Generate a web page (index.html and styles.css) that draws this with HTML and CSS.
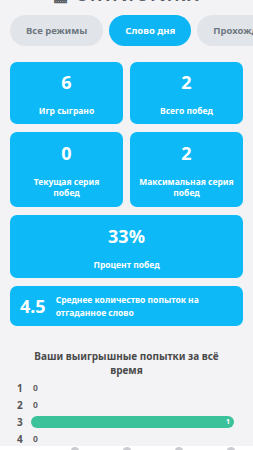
FILE: index.html
```html
<!DOCTYPE html>
<html lang="ru">
<head>
    <meta charset="UTF-8">
    <meta name="viewport" content="width=device-width, initial-scale=1.0">
    <title>Статистика</title>
    <link rel="stylesheet" href="styles.css">
</head>
<body>

    <h2 class="title">&#9638; СТАТИСТИКА</h2>

    <div class="tabs">
        <button class="tab">Все режимы</button>
        <button class="tab active">Слово дня</button>
        <button class="tab">Прохождение</button>
    </div>

    <div class="stats-grid">
        <div class="stat-card">
            <div class="stat-value">6</div>
            <div class="stat-label">Игр сыграно</div>
        </div>
        <div class="stat-card">
            <div class="stat-value">2</div>
            <div class="stat-label">Всего побед</div>
        </div>
        <div class="stat-card tall">
            <div class="stat-value">0</div>
            <div class="stat-label">Текущая серия<br>побед</div>
        </div>
        <div class="stat-card tall">
            <div class="stat-value">2</div>
            <div class="stat-label">Максимальная серия<br>побед</div>
        </div>
        <div class="stat-card wide">
            <div class="stat-value">33%</div>
            <div class="stat-label">Процент побед</div>
        </div>
        <div class="stat-card row-card">
            <div class="stat-value">4.5</div>
            <div class="stat-label">Среднее количество попыток на<br>отгаданное слово</div>
        </div>
    </div>

    <h3 class="dist-title">Ваши выигрышные попытки за всё время</h3>

    <div class="distribution">
        <div class="dist-row"><span class="dist-num">1</span><span class="dist-count">0</span></div>
        <div class="dist-row"><span class="dist-num">2</span><span class="dist-count">0</span></div>
        <div class="dist-row">
            <span class="dist-num">3</span>
            <div class="dist-bar" style="width: 100%;">1</div>
        </div>
        <div class="dist-row"><span class="dist-num">4</span><span class="dist-count">0</span></div>
        <div class="dist-row"><span class="dist-num">5</span><span class="dist-count">0</span></div>
    </div>

    <nav class="bottom-nav">
        <span class="nav-icon"></span>
        <span class="nav-icon"></span>
        <span class="nav-icon"></span>
        <span class="nav-icon"></span>
    </nav>

</body>
</html>
```

FILE: styles.css
```css
/* Reset styles */
* {
    margin: 0;
    padding: 0;
    box-sizing: border-box;
}

body {
    font-family: 'Noto Sans', 'Lato', sans-serif;
    background-color: #f3f3f6;
    color: #444;
    padding: 0 10px;
    overflow: hidden;
    height: 450px;
}

/* Title (scrolled mostly out of view) */
.title {
    font-size: 16px;
    font-weight: 700;
    letter-spacing: 2px;
    color: #5a5f66;
    text-align: center;
    line-height: 16px;
    margin-top: -13px;
}

/* Mode tabs */
.tabs {
    display: flex;
    gap: 6px;
    margin-top: 12px;
    margin-right: -10px;
    overflow: hidden;
}

.tab {
    flex-shrink: 0;
    height: 31px;
    padding: 0 16px;
    border: none;
    border-radius: 16px;
    background-color: #e1e5ea;
    color: #6e7780;
    font-family: inherit;
    font-size: 9.5px;
    font-weight: 700;
}

.tab.active {
    background-color: #0db5f5;
    color: #ffffff;
}

/* Stat cards */
.stats-grid {
    display: grid;
    grid-template-columns: 1fr 1fr;
    gap: 8px 7px;
    margin-top: 16px;
}

.stat-card {
    background-color: #0db9f7;
    border-radius: 7px;
    color: #ffffff;
    text-align: center;
    height: 62px;
    padding-top: 9px;
}

.stat-card.tall {
    height: 75px;
    padding-top: 10px;
}

.stat-card.wide {
    grid-column: span 2;
    height: 63px;
    padding-top: 10px;
}

.stat-value {
    font-size: 18px;
    font-weight: 700;
    line-height: 22px;
}

.stat-label {
    font-size: 8.5px;
    font-weight: 700;
    line-height: 11px;
    margin-top: 12px;
}

.stat-card.row-card {
    grid-column: span 2;
    height: 40px;
    padding: 0 0 0 10px;
    display: flex;
    align-items: center;
    gap: 10px;
    text-align: left;
}

.row-card .stat-label {
    margin-top: 0;
    line-height: 13px;
}

/* Guess distribution */
.dist-title {
    font-size: 10px;
    font-weight: 700;
    color: #4a4a4a;
    text-align: center;
    line-height: 14px;
    margin: 23px auto 0;
    width: 190px;
}

.distribution {
    margin-top: 2px;
    padding-left: 7px;
}

.dist-row {
    display: flex;
    align-items: center;
    height: 17px;
    font-weight: 700;
    color: #555;
}

.dist-num {
    font-size: 10px;
    width: 16px;
}

.dist-count {
    font-size: 8.5px;
    color: #666;
}

.dist-bar {
    height: 12px;
    border-radius: 6px;
    background-color: #3cc29b;
    color: #ffffff;
    font-size: 7px;
    text-align: right;
    padding-right: 4px;
    line-height: 12px;
    margin-right: 9px;
}

/* Bottom navigation */
.bottom-nav {
    position: fixed;
    left: 0;
    right: 0;
    bottom: 0;
    height: 4px;
    background-color: #ffffff;
    display: flex;
    justify-content: flex-end;
    gap: 44px;
    padding: 1px 18px 0 0;
}

.nav-icon {
    width: 8px;
    height: 8px;
    border-radius: 50%;
    background-color: #c9cbd0;
}
```
